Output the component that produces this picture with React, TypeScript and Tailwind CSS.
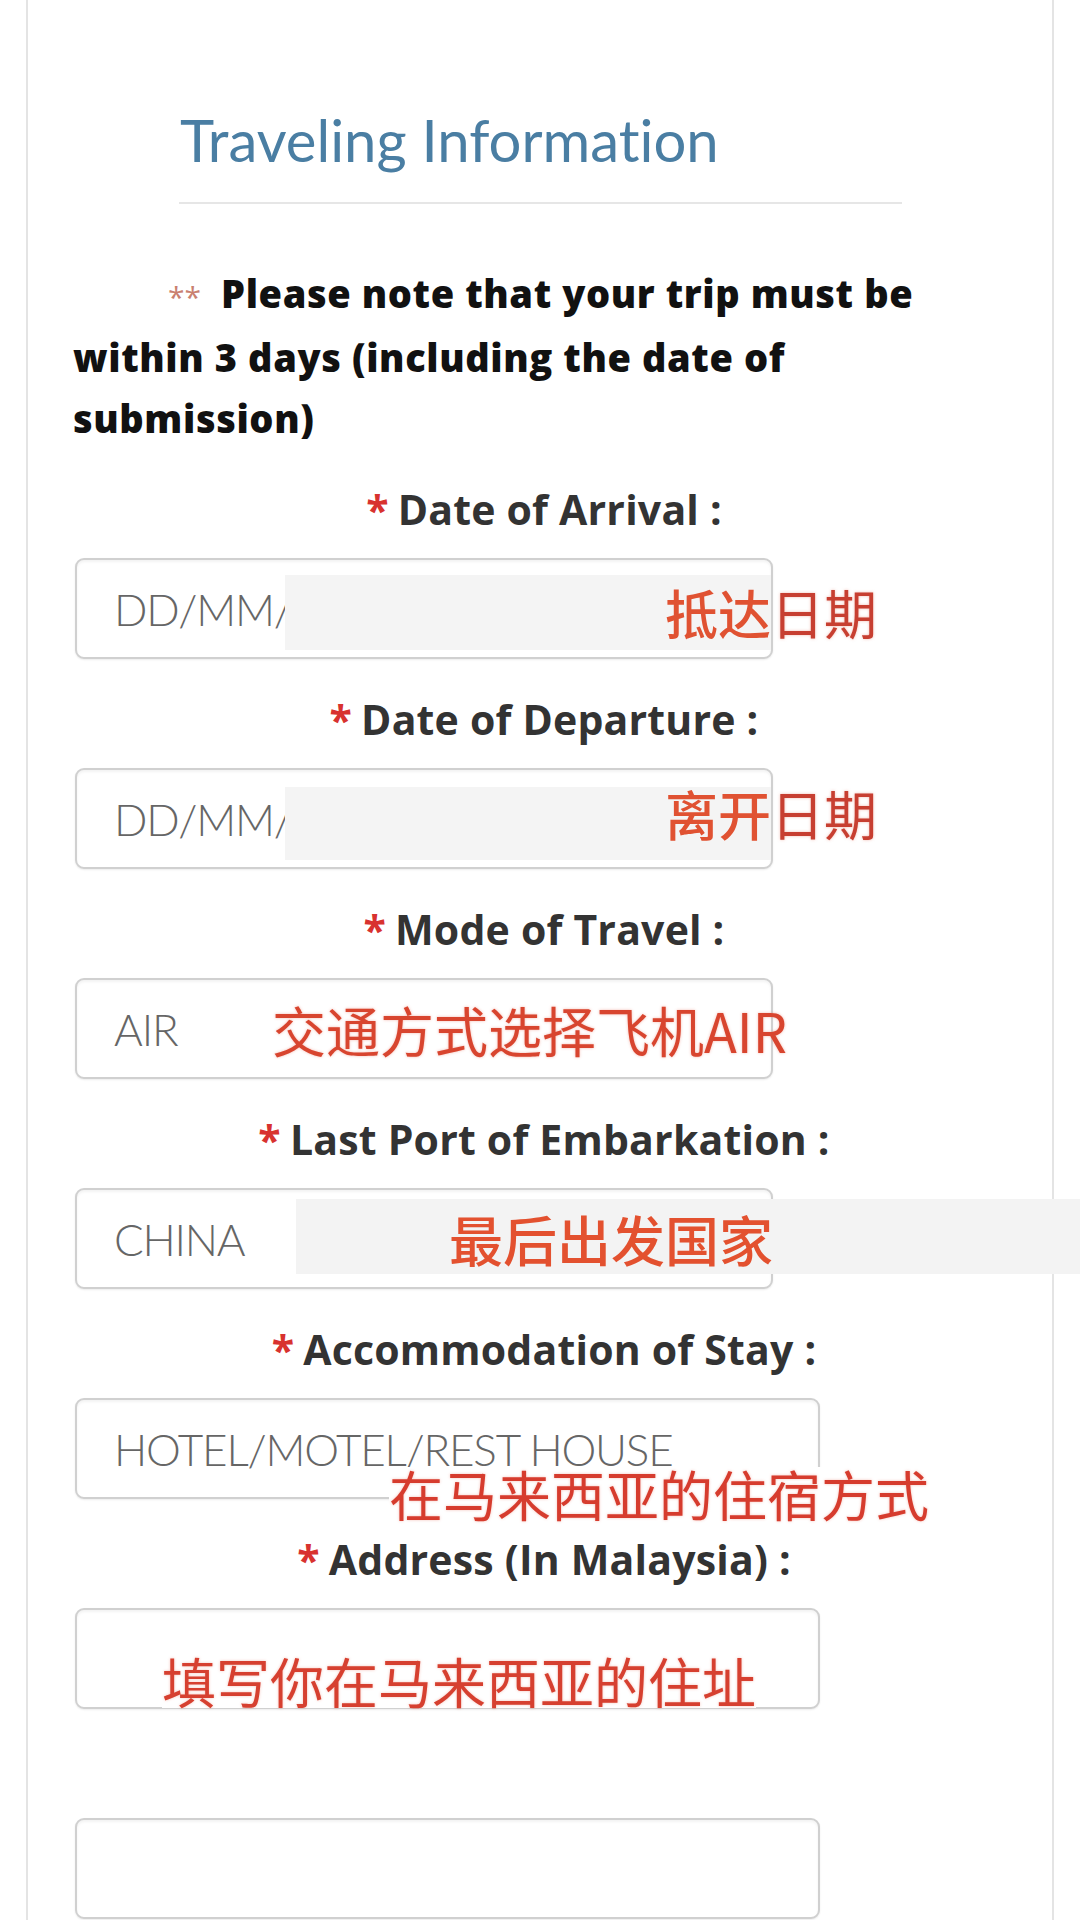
import React from "react";

function Label({ text }: { text?: string }) {
  return (
    <div className="h-[56px] pl-[8px] flex items-center justify-center whitespace-nowrap font-['Open_Sans',sans-serif] font-bold text-[41px] leading-[56px] tracking-[0.2px] text-[#333333]">
      {text ? (
        <>
          <span className="text-[#d8322f] mr-[9px]">*</span>
          {text}
        </>
      ) : null}
    </div>
  );
}

function Field({
  label,
  value,
  wide,
  children,
}: {
  label?: string;
  value?: string;
  wide?: boolean;
  children?: React.ReactNode;
}) {
  return (
    <div className="pt-[32px]">
      <Label text={label} />
      <div
        className={
          wide
            ? "relative mt-[21px] ml-[47px] w-[745px] h-[101px] border-2 border-[#d0d0d0] rounded-[9px] bg-white shadow-[inset_0_2px_3px_rgba(0,0,0,0.05),0_1px_2px_rgba(0,0,0,0.08)] flex items-center pl-[37px]"
            : "relative mt-[21px] ml-[47px] w-[698px] h-[101px] border-2 border-[#d0d0d0] rounded-[9px] bg-white shadow-[inset_0_2px_3px_rgba(0,0,0,0.05),0_1px_2px_rgba(0,0,0,0.08)] flex items-center pl-[37px]"
        }
      >
        {value ? (
          <span className="font-['Lato',sans-serif] font-light text-[44px] tracking-[-1.2px] leading-none text-[#666666] whitespace-nowrap">
            {value}
          </span>
        ) : null}
        {children}
      </div>
    </div>
  );
}

const cjk = "font-['Noto_Sans_CJK_SC','Noto_Sans_CJK_TC',sans-serif]";

export default function App() {
  return (
    <div className="w-[1080px] h-[1920px] bg-white overflow-hidden relative">
      <div className="ml-[26px] w-[1028px] h-[1920px] border-x-2 border-[#e4e4e4] pt-[105px]">
        <h1 className="pl-[152px] font-['Lato',sans-serif] font-normal text-[58px] leading-[70px] text-[#4a7ea3] whitespace-nowrap [font-variant-ligatures:none]">
          Traveling Information
        </h1>
        <div className="ml-[151px] mt-[27px] w-[723px] h-[2px] bg-[#e6e6e6]" />

        <p className="mt-[59px] pl-[45px] font-['Open_Sans',sans-serif] font-extrabold text-[38px] leading-[61px] tracking-[0.6px] text-[#111111] whitespace-nowrap">
          <span className="inline-block ml-[95px] mr-[20px] font-normal text-[30px] tracking-[0px] text-[#c98070]">
            **
          </span>
          Please note that your trip must be
          <br />
          within 3 days (including the date of
          <br />
          submission)
        </p>

        <Field label="Date of Arrival :" value="DD/MM/YYYY">
          <div className="absolute left-[208px] top-[15px] w-[486px] h-[75px] bg-[#f4f4f4]" />
          <span className={`absolute left-[588px] top-[26px] ${cjk} text-[53px] leading-none whitespace-nowrap`}>
            <span className="font-medium text-[#e05232]">抵达</span>
            <span className="text-[#c73f31] [text-shadow:0_0_3px_rgba(230,120,100,0.5)]">日期</span>
          </span>
        </Field>

        <Field label="Date of Departure :" value="DD/MM/YYYY">
          <div className="absolute left-[208px] top-[17px] w-[486px] h-[73px] bg-[#f4f4f4]" />
          <span className={`absolute left-[588px] top-[17px] ${cjk} text-[53px] leading-none whitespace-nowrap`}>
            <span className="font-medium text-[#e05232]">离开</span>
            <span className="text-[#c73f31] [text-shadow:0_0_3px_rgba(230,120,100,0.5)]">日期</span>
          </span>
        </Field>

        <Field label="Mode of Travel :" value="AIR">
          <span className={`absolute left-[195px] top-[23px] ${cjk} text-[54px] leading-none whitespace-nowrap text-[#d8452f] [text-shadow:0_0_3px_rgba(230,100,80,0.45)]`}>
            交通方式选择飞机AIR
          </span>
        </Field>

        <Field label="Last Port of Embarkation :" value="CHINA">
          <div className="absolute left-[219px] top-[9px] w-[784px] h-[75px] bg-[#f3f3f3]" />
          <span className={`absolute left-[372px] top-[22px] ${cjk} font-medium text-[54px] leading-none whitespace-nowrap text-[#e3512f]`}>
            最后出发国家
          </span>
        </Field>

        <Field label="Accommodation of Stay :" value="HOTEL/MOTEL/REST HOUSE" wide>
          <span className={`absolute left-[312px] top-[67px] bg-white ${cjk} font-normal text-[54px] leading-none whitespace-nowrap text-[#d63c2e] [text-shadow:0_0_3px_rgba(230,100,80,0.4)]`}>
            在马来西亚的住宿方式
          </span>
        </Field>

        <Field label="Address (In Malaysia) :" wide>
          <span className={`absolute left-[85px] top-[44px] bg-white ${cjk} font-normal text-[54px] leading-none whitespace-nowrap text-[#d64030] [text-shadow:0_0_3px_rgba(230,100,80,0.4)]`}>
            填写你在马来西亚的住址
          </span>
        </Field>

        <Field wide />
      </div>
    </div>
  );
}
